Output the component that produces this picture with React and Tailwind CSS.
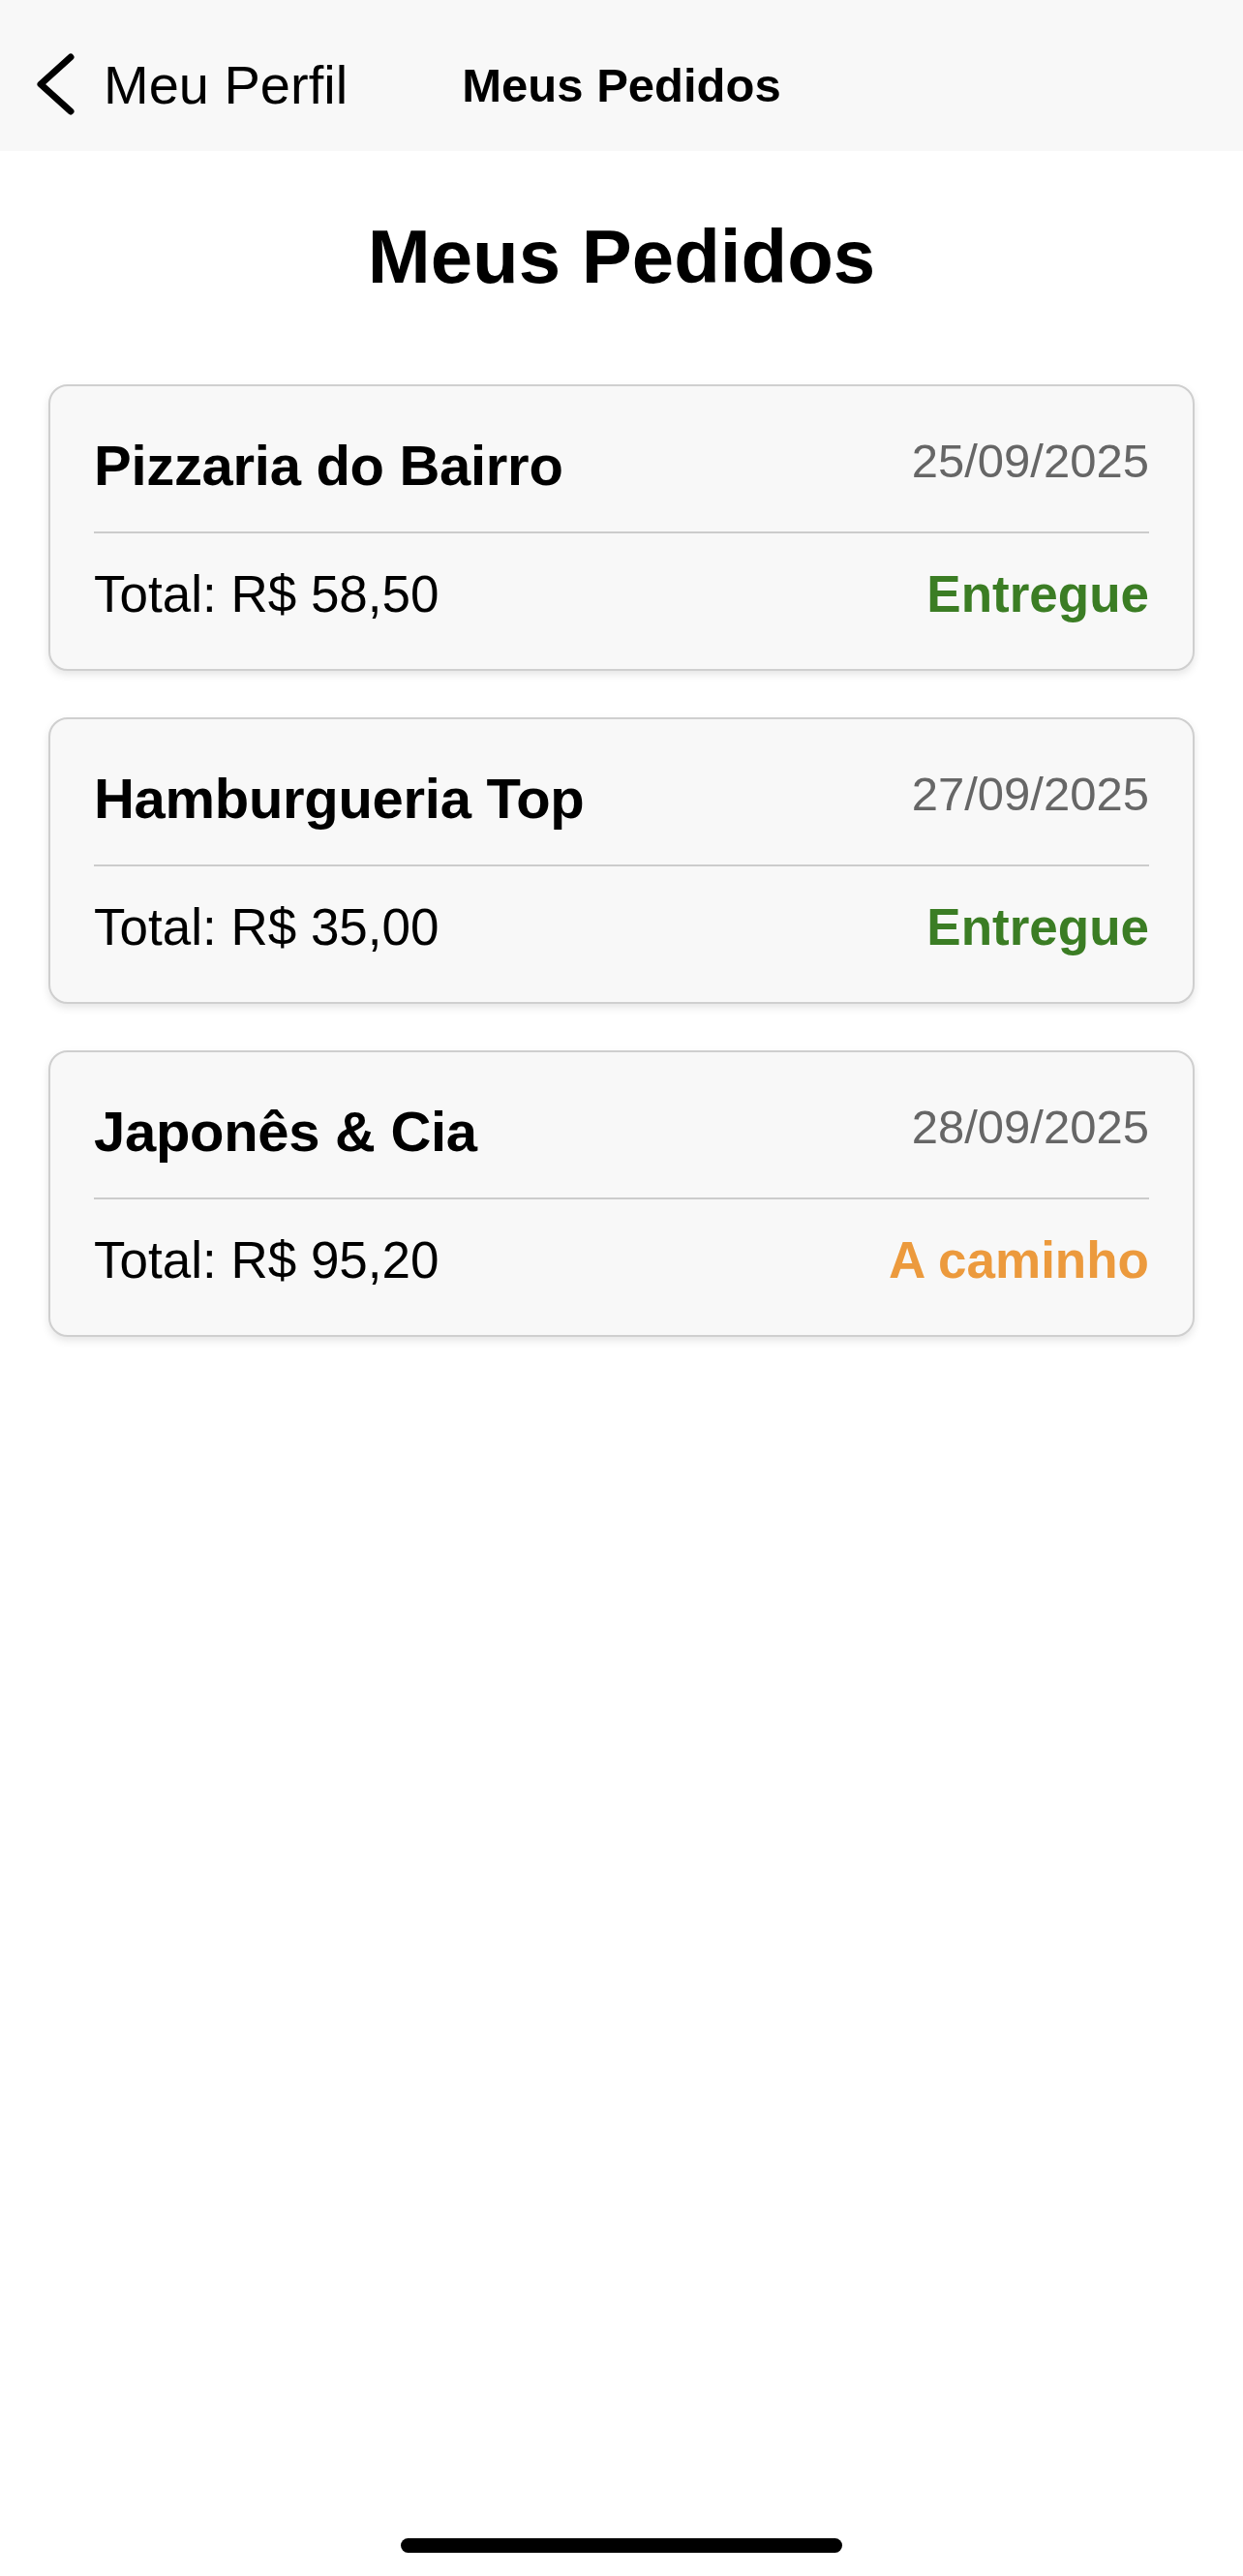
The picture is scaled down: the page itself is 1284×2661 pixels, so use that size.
import React from "react";

const ORDERS = [
  { id: 1, name: "Pizzaria do Bairro", date: "25/09/2025", total: "58,50", status: "Entregue" },
  { id: 2, name: "Hamburgueria Top", date: "27/09/2025", total: "35,00", status: "Entregue" },
  { id: 3, name: "Japonês & Cia", date: "28/09/2025", total: "95,20", status: "A caminho" },
];

function OrderCard({ order }) {
  const done = order.status === "Entregue";
  return (
    <div className="bg-[#f8f8f8] border-2 border-[#cfcfcf] rounded-[20px] px-[45px] pt-[53px] pb-[51px] shadow-[0_4px_8px_rgba(0,0,0,0.10)]">
      <div className="flex justify-between items-start pb-[39px] border-b-2 border-[#cccccc]">
        <span className="text-[58px] leading-none font-bold tracking-[-0.3px] text-black">{order.name}</span>
        <span className="text-[49px] leading-none text-[#666666]">{order.date}</span>
      </div>
      <div className="flex justify-between items-center pt-[36px]">
        <span className="text-[53px] leading-none text-black">Total: R$ {order.total}</span>
        <span className={`text-[53px] leading-none font-bold ${done ? "text-[#3b7d24]" : "text-[#ec9a3d]"}`}>
          {order.status}
        </span>
      </div>
    </div>
  );
}

export default function App() {
  return (
    <div className="min-h-[2661px] bg-white flex flex-col font-['Liberation_Sans',Arial,sans-serif]">
      {/* barra de navegação */}
      <header className="h-[156px] pt-[20px] bg-[#f8f8f8] grid grid-cols-[1fr_auto_1fr] items-center">
        <div className="flex items-center pl-[36px]">
          <svg width="44" height="66" viewBox="0 0 44 66" className="shrink-0">
            <polyline points="37,4 6,32 37,60" fill="none" stroke="#000" strokeWidth="7" strokeLinecap="round" strokeLinejoin="round" />
          </svg>
          <span className="ml-[27px] text-[56px] leading-none text-black">Meu Perfil</span>
        </div>
        <span className="text-[49px] leading-none font-bold text-black">Meus Pedidos</span>
        <div />
      </header>

      <main className="px-[50px]">
        <h1 className="mt-[70px] text-center text-[78px] leading-none font-bold text-black">Meus Pedidos</h1>
        <div className="mt-[93px] flex flex-col gap-[48px]">
          {ORDERS.map((o) => (
            <OrderCard key={o.id} order={o} />
          ))}
        </div>
      </main>

      <div className="flex-1" />
      <div className="flex justify-center pb-[24px]">
        <div className="w-[456px] h-[15px] rounded-full bg-black" />
      </div>
    </div>
  );
}
